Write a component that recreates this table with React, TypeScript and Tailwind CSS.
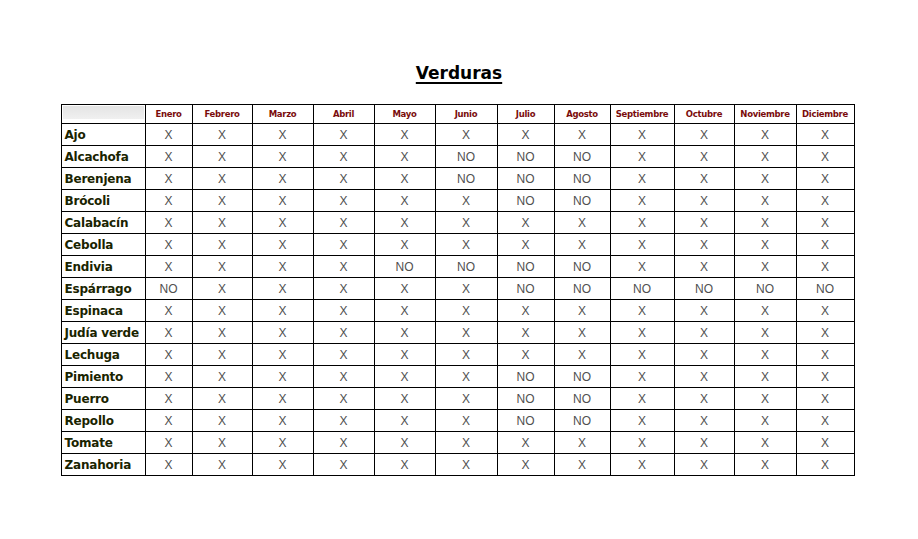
const MONTHS = [
  "Enero",
  "Febrero",
  "Marzo",
  "Abril",
  "Mayo",
  "Junio",
  "Julio",
  "Agosto",
  "Septiembre",
  "Octubre",
  "Noviembre",
  "Diciembre",
];

// ancho de cada columna en px (la primera es la de nombres)
const WIDTHS = [84, 47, 60, 61, 61, 61, 62, 57, 56, 64, 60, 62, 58];

// meses (índice 0-11) que NO son temporada
const ROWS: { name: string; no: number[] }[] = [
  { name: "Ajo", no: [] },
  { name: "Alcachofa", no: [5, 6, 7] },
  { name: "Berenjena", no: [5, 6, 7] },
  { name: "Brócoli", no: [6, 7] },
  { name: "Calabacín", no: [] },
  { name: "Cebolla", no: [] },
  { name: "Endivia", no: [4, 5, 6, 7] },
  { name: "Espárrago", no: [0, 6, 7, 8, 9, 10, 11] },
  { name: "Espinaca", no: [] },
  { name: "Judía verde", no: [] },
  { name: "Lechuga", no: [] },
  { name: "Pimiento", no: [6, 7] },
  { name: "Puerro", no: [6, 7] },
  { name: "Repollo", no: [6, 7] },
  { name: "Tomate", no: [] },
  { name: "Zanahoria", no: [] },
];

export default function App() {
  return (
    <div className="w-[918px] h-[539px] bg-white flex flex-col items-center pt-[60px] font-['DejaVu_Sans',sans-serif]">
      <h1 className="text-[17px] font-bold underline underline-offset-[3px] decoration-[2px] text-black leading-[26px]">
        Verduras
      </h1>

      <table className="mt-[18px] ml-[-3px] table-fixed border-collapse border border-black">
        <colgroup>
          {WIDTHS.map((w, i) => (
            <col key={i} style={{ width: w }} />
          ))}
        </colgroup>
        <thead>
          <tr className="h-[19px]">
            <th className="border border-black p-0 align-top">
              <div className="h-[13px] mx-px mt-px bg-gradient-to-b from-[#e4e4e4] to-[#f0f0f0]" />
            </th>
            {MONTHS.map((m) => (
              <th
                key={m}
                className="border border-black p-0 text-[8.5px] font-bold text-[#7a0c0c] tracking-[-0.3px] whitespace-nowrap"
              >
                {m}
              </th>
            ))}
          </tr>
        </thead>
        <tbody>
          {ROWS.map((r) => (
            <tr key={r.name} className="h-[22px]">
              <td className="border border-black pl-[3px] pr-0 py-0 text-[12px] font-bold text-[#1a2400] whitespace-nowrap tracking-[-0.2px]">
                {r.name}
              </td>
              {MONTHS.map((m, i) => (
                <td
                  key={m}
                  className="border border-black p-0 text-center text-[12px] text-[#505050] font-['Liberation_Sans',sans-serif]"
                >
                  {r.no.includes(i) ? "NO" : "X"}
                </td>
              ))}
            </tr>
          ))}
        </tbody>
      </table>
    </div>
  );
}
